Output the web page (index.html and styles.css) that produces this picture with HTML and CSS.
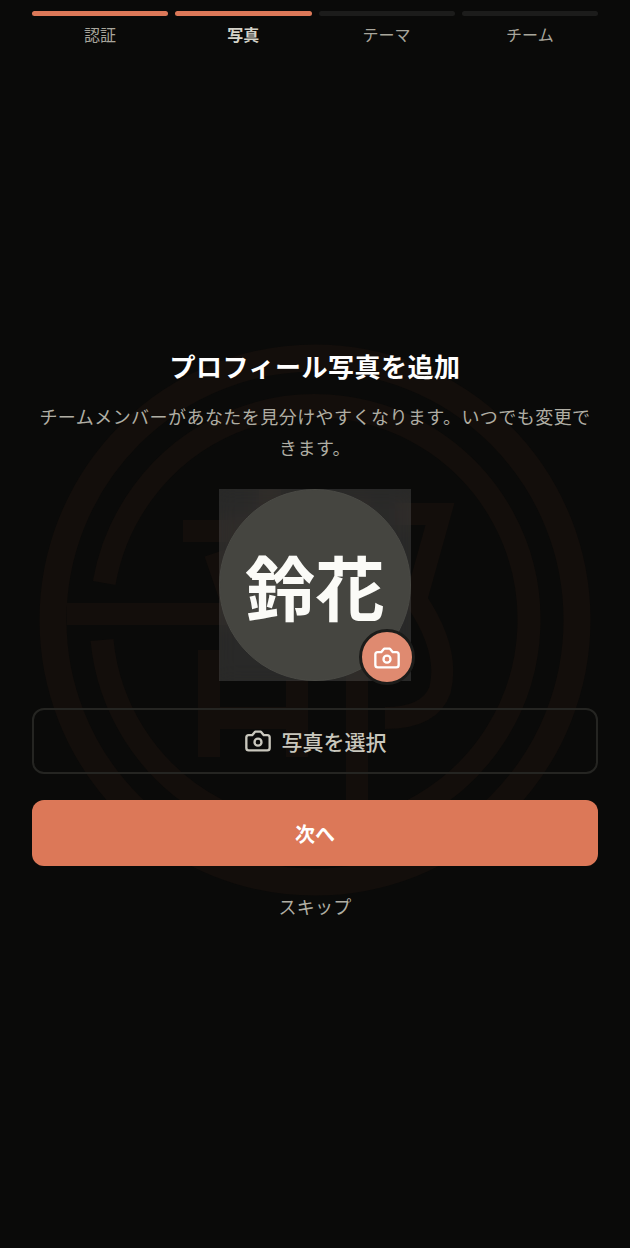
FILE: index.html
```html
<!DOCTYPE html>
<html lang="ja">
<head>
  <meta charset="UTF-8" />
  <meta name="viewport" content="width=device-width, initial-scale=1.0"/>
  <title>プロフィール写真を追加</title>
  <link rel="stylesheet" href="styles.css">
</head>
<body>
  <!-- faint seal behind the form, viewBox follows the page coordinates -->
  <svg class="seal" viewBox="35 340 560 560" aria-hidden="true">
    <g fill="none" stroke="#130e0b">
      <circle cx="315" cy="620" r="262" stroke-width="27"/>
      <path stroke-width="23" d="M104.200 583A214 214 0 1 1 102 640"/>
      <path stroke-width="22" d="M67 614H240M183 531H300M270 490V520M215 553L232 603M209 650V757M209 718H300M297 680V757M357 500V812"/>
      <path stroke-width="22" d="M395 514H440L416 600Q450 650 440 690Q430 718 385 718"/>
    </g>
  </svg>

  <div class="steps">
    <div class="step done"><div class="bar"></div><span>認証</span></div>
    <div class="step done current"><div class="bar"></div><span>写真</span></div>
    <div class="step"><div class="bar"></div><span>テーマ</span></div>
    <div class="step"><div class="bar"></div><span>チーム</span></div>
  </div>

  <div class="content">
    <h1>プロフィール写真を追加</h1>
    <p class="desc">チームメンバーがあなたを見分けやすくなります。いつでも変更できます。</p>

    <div class="avatar-box">
      <div class="avatar">鈴花</div>
      <div class="badge">
        <svg class="badge-icon" width="28" height="28" viewBox="0 0 24 24" fill="none" stroke="#fff" stroke-width="2" stroke-linecap="round" stroke-linejoin="round">
          <path d="M14.5 4h-5L7 7H4a2 2 0 0 0-2 2v9a2 2 0 0 0 2 2h16a2 2 0 0 0 2-2V9a2 2 0 0 0-2-2h-3l-2.500-3z"/>
          <circle cx="12" cy="13" r="3"/>
        </svg>
      </div>
    </div>

    <button class="btn-outline">
      <svg width="28" height="28" viewBox="0 0 24 24" fill="none" stroke="#c9c7bd" stroke-width="2" stroke-linecap="round" stroke-linejoin="round">
        <path d="M14.5 4h-5L7 7H4a2 2 0 0 0-2 2v9a2 2 0 0 0 2 2h16a2 2 0 0 0 2-2V9a2 2 0 0 0-2-2h-3l-2.500-3z"/>
        <circle cx="12" cy="13" r="3"/>
      </svg>
      写真を選択
    </button>
    <button class="btn-next">次へ</button>
    <button class="btn-skip">スキップ</button>
  </div>
</body>
</html>
```

FILE: styles.css
```css
* { box-sizing: border-box; }
html, body { height: 100%; }
body { margin: 0; background: #0a0a09; font-family: "Noto Sans CJK JP", "Noto Sans", sans-serif; color: #fff; overflow: hidden; }
button { font-family: inherit; cursor: pointer; }

.seal { position: absolute; left: 35px; top: 340px; width: 560px; height: 560px; }

.steps { display: flex; gap: 7px; padding: 11px 32px 0; position: relative; }
.step { flex: 1; text-align: center; font-size: 16px; line-height: 24px; color: #a8a69c; }
.step .bar { height: 5px; border-radius: 3px; background: #1c1c1b; margin-bottom: 6px; }
.step.done .bar { background: #dc7858; }
.step.current { color: #d4d2c8; font-weight: 700; }

.content { position: relative; display: flex; flex-direction: column; align-items: center; padding: 300px 32px 0; }
h1 { margin: 0 0 15px; font-size: 26px; letter-spacing: 0.5px; line-height: 40px; font-weight: 700; }
.desc { margin: 0 0 26px; width: 100%; font-size: 18px; letter-spacing: 0.45px; line-height: 31px; color: #b0aea4; text-align: center; }

.avatar-box { position: relative; width: 192px; height: 192px; background: rgba(255, 255, 255, 0.13); backdrop-filter: blur(10px); margin-bottom: 27px; }
.avatar { width: 192px; height: 192px; border-radius: 50%; background: #454540; border: 1px solid #4a4a45; display: flex; align-items: center; justify-content: center; font-size: 70px; font-weight: 700; color: #fbfbf7; }
.badge { position: absolute; right: -4px; bottom: -4px; width: 56px; height: 56px; border-radius: 50%; background: #df8a70; border: 3px solid #1c1c1a; display: flex; align-items: center; justify-content: center; }
.badge-icon { margin-top: 1px; }

.btn-outline { width: 100%; height: 66px; border: 2px solid #252522; border-radius: 12px; background: transparent; color: #c9c7bd; font-size: 21px; font-weight: 500; display: flex; align-items: center; justify-content: center; gap: 10px; margin-bottom: 26px; }
.btn-next { width: 100%; height: 66px; border: 0; border-radius: 12px; background: #dc7858; color: #fff; font-size: 20px; font-weight: 700; margin-bottom: 20px; }
.btn-skip { border: 0; background: none; color: #b0aea4; font-size: 18px; letter-spacing: 0.3px; line-height: 40px; padding: 0; }
```
